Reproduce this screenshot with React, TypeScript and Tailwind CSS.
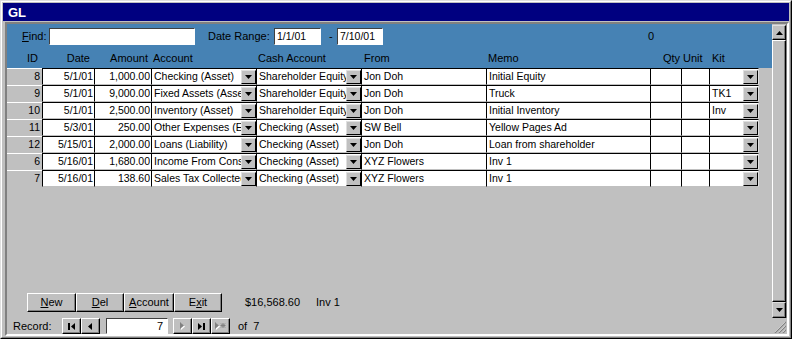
import React from "react";

type Row = {
  id: number;
  date: string;
  amt: string;
  acct: string;
  cash: string;
  from: string;
  memo: string;
  kit: string;
};

const rows: Row[] = [
  { id: 8, date: "5/1/01", amt: "1,000.00", acct: "Checking (Asset)", cash: "Shareholder Equity", from: "Jon Doh", memo: "Initial Equity", kit: "" },
  { id: 9, date: "5/1/01", amt: "9,000.00", acct: "Fixed Assets (Asset)", cash: "Shareholder Equity", from: "Jon Doh", memo: "Truck", kit: "TK1" },
  { id: 10, date: "5/1/01", amt: "2,500.00", acct: "Inventory (Asset)", cash: "Shareholder Equity", from: "Jon Doh", memo: "Initial Inventory", kit: "Inv" },
  { id: 11, date: "5/3/01", amt: "250.00", acct: "Other Expenses (Expense)", cash: "Checking (Asset)", from: "SW Bell", memo: "Yellow Pages Ad", kit: "" },
  { id: 12, date: "5/15/01", amt: "2,000.00", acct: "Loans (Liability)", cash: "Checking (Asset)", from: "Jon Doh", memo: "Loan from shareholder", kit: "" },
  { id: 6, date: "5/16/01", amt: "1,680.00", acct: "Income From Consulting", cash: "Checking (Asset)", from: "XYZ Flowers", memo: "Inv 1", kit: "" },
  { id: 7, date: "5/16/01", amt: "138.60", acct: "Sales Tax Collected", cash: "Checking (Asset)", from: "XYZ Flowers", memo: "Inv 1", kit: "" },
];

function DownTri({ color = "#000" }: { color?: string }) {
  return (
    <svg width="7" height="4" viewBox="0 0 7 4">
      <path d="M0 0H7L3.5 4Z" fill={color} />
    </svg>
  );
}

function DropBtn() {
  return (
    <div className="w-[15px] h-[14px] shrink-0 bg-[#c0c0c0] border-t border-l border-t-[#dfdfdf] border-l-[#dfdfdf] border-b border-r border-b-black border-r-black flex items-center justify-center">
      <DownTri />
    </div>
  );
}

function Cell({
  w,
  children,
  right,
  drop,
}: {
  w: string;
  children?: React.ReactNode;
  right?: boolean;
  drop?: boolean;
}) {
  return (
    <div
      className={`${w} h-[17px] shrink-0 bg-white border-t border-l border-t-black border-l-black border-b border-b-[#c0c0c0] flex items-center overflow-hidden`}
    >
      <div
        className={`flex-1 min-w-0 overflow-hidden whitespace-nowrap leading-[15px] text-[10.5px] ${
          right ? "text-right pr-[1px]" : "pl-[2px]"
        }`}
      >
        {children}
      </div>
      {drop && <DropBtn />}
    </div>
  );
}

function RaisedBtn({ w, children }: { w: string; children: React.ReactNode }) {
  return (
    <div className={`${w} h-[19px] bg-[#c0c0c0] border-t border-l border-t-white border-l-white border-b border-r border-b-black border-r-black flex items-center justify-center shadow-[inset_-1px_-1px_0_#808080]`}>
      {children}
    </div>
  );
}

function NavBtn({ children }: { children: React.ReactNode }) {
  return (
    <div className="w-[19px] h-[16px] bg-[#c0c0c0] border-t border-l border-t-white border-l-white border-b border-r border-b-black border-r-black flex items-center justify-center shadow-[inset_-1px_-1px_0_#808080]">
      {children}
    </div>
  );
}

export default function App() {
  return (
    <div className="w-[792px] h-[339px] bg-[#c0c0c0] border border-t-[#dfdfdf] border-l-[#dfdfdf] border-b-black border-r-black font-['Liberation_Sans',Arial,sans-serif] text-[11px] text-black overflow-hidden">
      <div className="w-full h-full border border-t-white border-l-white border-b-[#808080] border-r-[#808080] p-[1px] flex flex-col">
        {/* Title bar */}
        <div className="h-[18px] shrink-0 bg-[#000080] flex items-center pl-[5px]">
          <span className="text-white font-bold text-[13px] leading-none">GL</span>
        </div>
        {/* Client area */}
        <div className="mt-[1px] ml-[2px] flex-1 min-h-0 border-2 border-t-[#808080] border-l-[#808080] border-b-white border-r-white flex flex-col">
          <div className="flex h-[294px] shrink-0">
            {/* Form */}
            <div className="w-[765px] shrink-0 flex flex-col">
              {/* Header */}
              <div className="h-[44px] shrink-0 bg-[#4682b4] flex flex-col">
                <div className="h-[17px] mt-[4px] flex items-center">
                  <span className="ml-[15px] w-[27px]">
                    <span className="underline">F</span>ind:
                  </span>
                  <div className="w-[146px] h-[17px] bg-white border border-t-[#404040] border-l-[#404040] border-b-white border-r-white" />
                  <span className="ml-[13px] w-[66px]">Date Range:</span>
                  <div className="w-[47px] h-[17px] bg-white border border-t-[#404040] border-l-[#404040] border-b-white border-r-white flex items-center pl-[2px] leading-none text-[10.5px]">
                    1/1/01
                  </div>
                  <span className="ml-[8px] w-[8px]">-</span>
                  <div className="w-[46px] h-[17px] bg-white border border-t-[#404040] border-l-[#404040] border-b-white border-r-white flex items-center pl-[2px] leading-none text-[10.5px]">
                    7/10/01
                  </div>
                  <span className="ml-[265px]">0</span>
                </div>
                <div className="h-[18px] mt-[4px] flex items-center leading-[18px]">
                  <div className="w-[35px] text-right pr-[4px]">ID</div>
                  <div className="w-[52px] text-right pr-[4px]">Date</div>
                  <div className="w-[57px] text-right pr-[3px]">Amount</div>
                  <div className="w-[105px] pl-[2px]">Account</div>
                  <div className="w-[105px] pl-[2px]">Cash Account</div>
                  <div className="w-[125px] pl-[3px]">From</div>
                  <div className="w-[164px] pl-[2px]">Memo</div>
                  <div className="w-[31px] text-right pr-[1px]">Qty</div>
                  <div className="w-[28px] pl-[2px]">Unit</div>
                  <div className="w-[50px] pl-[3px]">Kit</div>
                </div>
              </div>
              {/* Detail rows */}
              <div className="flex flex-col">
                {rows.map((r) => (
                  <div key={r.id} className="flex h-[17px]">
                    <div className="w-[35px] h-[17px] shrink-0 bg-[#c0c0c0] border-t border-t-white text-right pr-[2px] leading-[15px] text-[10.5px]">
                      {r.id}
                    </div>
                    <Cell w="w-[52px]" right>
                      {r.date}
                    </Cell>
                    <Cell w="w-[57px]" right>
                      {r.amt}
                    </Cell>
                    <Cell w="w-[105px]" drop>
                      {r.acct}
                    </Cell>
                    <Cell w="w-[105px]" drop>
                      {r.cash}
                    </Cell>
                    <Cell w="w-[125px]">{r.from}</Cell>
                    <Cell w="w-[164px]">{r.memo}</Cell>
                    <Cell w="w-[31px]" />
                    <Cell w="w-[28px]" />
                    <div className="w-[50px] h-[17px] shrink-0 bg-white border-t border-l border-t-black border-l-black border-b border-b-[#c0c0c0] border-r border-r-[#dfdfdf] flex items-center overflow-hidden">
                      <div className="flex-1 pl-[2px] leading-[15px] whitespace-nowrap text-[10.5px]">{r.kit}</div>
                      <DropBtn />
                    </div>
                  </div>
                ))}
              </div>
              <div className="flex-1" />
              {/* Footer */}
              <div className="h-[19px] shrink-0 flex items-center mb-[6px]">
                <div className="ml-[20px] flex">
                  <RaisedBtn w="w-[49px]">
                    <span>
                      <span className="underline">N</span>ew
                    </span>
                  </RaisedBtn>
                  <RaisedBtn w="w-[48px]">
                    <span>
                      <span className="underline">D</span>el
                    </span>
                  </RaisedBtn>
                  <RaisedBtn w="w-[50px]">
                    <span>
                      <span className="underline">A</span>ccount
                    </span>
                  </RaisedBtn>
                  <RaisedBtn w="w-[48px]">
                    <span>
                      E<span className="underline">x</span>it
                    </span>
                  </RaisedBtn>
                </div>
                <span className="ml-[23px]">$16,568.60</span>
                <span className="ml-[16px]">Inv 1</span>
              </div>
            </div>
            {/* Vertical scrollbar */}
            <div className="w-[15px] shrink-0 flex flex-col pt-[1px] border-r border-r-[#808080]">
              <div className="h-[15px] bg-[#c0c0c0] border-t border-l border-t-[#dfdfdf] border-l-[#dfdfdf] border-b border-r border-b-black border-r-black flex items-center justify-center shadow-[inset_-1px_-1px_0_#808080]">
                <svg width="7" height="4" viewBox="0 0 7 4">
                  <path d="M3.5 0L7 4H0Z" fill="#000" />
                </svg>
              </div>
              <div className="flex-1 bg-[#c0c0c0] border-t border-l border-t-white border-l-white border-b border-r border-b-black border-r-black shadow-[inset_-1px_-1px_0_#808080]" />
              <div className="h-[16px] bg-[#c0c0c0] border-t border-l border-t-[#dfdfdf] border-l-[#dfdfdf] border-b border-r border-b-black border-r-black flex items-center justify-center shadow-[inset_-1px_-1px_0_#808080]">
                <DownTri />
              </div>
            </div>
          </div>
          {/* Record navigation */}
          <div className="h-[16px] shrink-0 flex items-center relative">
            <span className="ml-[6px] w-[43px]">Record:</span>
            <div className="ml-[6px] flex">
              <NavBtn>
                <svg width="8" height="7" viewBox="0 0 8 7">
                  <rect x="0" y="0" width="2" height="7" fill="#000" />
                  <path d="M7 0V7L3 3.5Z" fill="#000" />
                </svg>
              </NavBtn>
              <NavBtn>
                <svg width="5" height="7" viewBox="0 0 5 7">
                  <path d="M4 0V7L0 3.5Z" fill="#000" />
                </svg>
              </NavBtn>
            </div>
            <div className="ml-[6px] w-[62px] h-[16px] bg-white border border-t-[#404040] border-l-[#404040] border-b-white border-r-white text-right pr-[4px] leading-[14px]">
              7
            </div>
            <div className="ml-[5px] flex">
              <NavBtn>
                <svg width="6" height="8" viewBox="0 0 6 8">
                  <path d="M1 1V8L5 4.5Z" fill="#fff" />
                  <path d="M0 0V7L4 3.5Z" fill="#808080" />
                </svg>
              </NavBtn>
              <NavBtn>
                <svg width="8" height="7" viewBox="0 0 8 7">
                  <path d="M0 0V7L4 3.5Z" fill="#000" />
                  <rect x="5" y="0" width="2" height="7" fill="#000" />
                </svg>
              </NavBtn>
              <NavBtn>
                <svg width="12" height="8" viewBox="0 0 12 8">
                  <path d="M1 1V8L5 4.5Z" fill="#fff" />
                  <path d="M0 0V7L4 3.5Z" fill="#808080" />
                  <path d="M8 1V6M5.5 3.5H10.5M6 1.5L10 5.5M10 1.5L6 5.5" stroke="#808080" strokeWidth="1" />
                </svg>
              </NavBtn>
            </div>
            <span className="ml-[8px]">of&nbsp;&nbsp;7</span>
            <svg className="absolute right-[1px] bottom-[1px]" width="12" height="12" viewBox="0 0 12 12">
              <path d="M11 1L1 11M11 5L5 11M11 9L9 11" stroke="#fff" strokeWidth="1" />
              <path d="M12 1L1 12M12 5L5 12M12 9L9 12" stroke="#808080" strokeWidth="1.2" />
            </svg>
          </div>
        </div>
      </div>
    </div>
  );
}
